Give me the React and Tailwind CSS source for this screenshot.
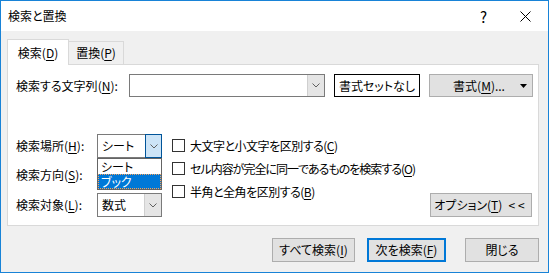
import React from 'react';

const font = "font-['Noto_Sans_CJK_JP','Noto_Sans',sans-serif] [font-feature-settings:'palt']";

// label text with an underlined access key, e.g. 検索(D)
function Label({ text, hotkey, tail = '' }) {
  return (
    <span className="whitespace-nowrap">
      {text}(<span className="underline underline-offset-2">{hotkey}</span>){tail}
    </span>
  );
}

function Chevron() {
  return (
    <svg width="8" height="5" viewBox="0 0 8 5" className="block">
      <path d="M0.5 0.5 L4 4 L7.5 0.5" fill="none" stroke="#606060" strokeWidth="1" />
    </svg>
  );
}

function Combo({ value, width, height = 'h-[24px]', active = false }) {
  return (
    <div className={`flex shrink-0 ${height} ${width} border border-[#7a7a7a] bg-white`}>
      <div className="flex flex-1 items-center pl-[4px]">{value}</div>
      <div
        className={
          active
            ? 'flex w-[17px] items-center justify-center border border-[#005499] bg-[#cce4f7] -m-px'
            : 'flex w-[17px] items-center justify-center border-l border-[#cfcfcf] bg-[#e5e5e5]'
        }
      >
        <Chevron />
      </div>
    </div>
  );
}

function Check({ children, tracking }) {
  return (
    <div className="flex h-[23px] items-center gap-[5px]">
      <div className="h-[13px] w-[13px] shrink-0 border border-[#333333] bg-white" />
      <span className={tracking}>{children}</span>
    </div>
  );
}

function Btn({ children, width, primary = false }) {
  return (
    <div
      className={
        'flex h-[24px] shrink-0 items-center justify-center bg-[#e1e1e1] ' +
        width +
        (primary ? ' border-2 border-[#0078d7]' : ' border border-[#adadad]')
      }
    >
      {children}
    </div>
  );
}

export default function App() {
  return (
    <div className={`flex h-[273px] w-[549px] flex-col border border-[#1883d7] text-[12px] leading-none text-black ${font}`}>
      {/* Title bar */}
      <div className="flex h-[30px] items-center bg-white pl-[7px]">
        <span>検索と置換</span>
        <span className="ml-auto mr-[33px] text-[15px]">?</span>
        <svg width="11" height="11" viewBox="0 0 11 11" className="mr-[17px]">
          <path d="M0.5 0.5 L10.5 10.5 M10.5 0.5 L0.5 10.5" stroke="#000" strokeWidth="1" />
        </svg>
      </div>

      {/* Body */}
      <div className="flex flex-1 flex-col bg-[#f0f0f0] pl-[6px] pr-[9px] pt-[8px]">
        {/* Tabs */}
        <div className="flex h-[25px] items-start">
          <div className="relative z-10 flex h-[26px] w-[62px] items-center justify-center border border-b-0 border-[#d9d9d9] bg-white">
            <Label text="検索" hotkey="D" />
          </div>
          <div className="mt-[2px] flex h-[23px] w-[55px] items-center justify-center border border-b-0 border-l-0 border-[#d9d9d9] bg-[#f0f0f0]">
            <Label text="置換" hotkey="P" />
          </div>
        </div>

        {/* Panel */}
        <div className="flex h-[162px] flex-col border border-[#d9d9d9] bg-white pl-[8px] pt-[9px]">
          <div className="flex items-center">
            <div className="w-[113px]">
              <Label text="検索する文字列" hotkey="N" tail=":" />
            </div>
            <Combo value="" width="w-[196px]" height="h-[23px]" />
            <div className="ml-[9px] flex h-[23px] w-[86px] items-center justify-center border border-black bg-white">
              書式セットなし
            </div>
            <div className="ml-[9px] flex h-[23px] w-[104px] items-center border border-[#adadad] bg-[#e1e1e1]">
              <span className="flex-1 text-center pl-[8px]">
                <Label text="書式" hotkey="M" tail="..." />
              </span>
              <svg width="7" height="4" viewBox="0 0 7 4" className="mr-[5px]">
                <path d="M0 0 H7 L3.5 4 Z" fill="#000" />
              </svg>
            </div>
          </div>

          <div className="mt-[37px] flex">
            {/* Left column: search options */}
            <div className="relative flex flex-col gap-[5px]">
              <div className="flex items-center">
                <div className="w-[81px]"><Label text="検索場所" hotkey="H" tail=":" /></div>
                <Combo value="シート" width="w-[65px]" active />
              </div>
              <div className="flex items-center">
                <div className="w-[81px]"><Label text="検索方向" hotkey="S" tail=":" /></div>
                <Combo value="" width="w-[65px]" />
              </div>
              <div className="mt-px flex items-center">
                <div className="w-[81px]"><Label text="検索対象" hotkey="L" tail=":" /></div>
                <Combo value="数式" width="w-[65px]" />
              </div>

              {/* open dropdown list */}
              <div className="absolute left-[81px] top-[24px] z-20 flex w-[65px] flex-col border border-[#646464] bg-white">
                <div className="flex h-[15px] items-center pl-[3px]">シート</div>
                <div className="flex h-[15px] items-center border border-dotted border-[#f7a35c] bg-[#0078d7] pl-[2px] text-white">
                  ブック
                </div>
              </div>
            </div>

            {/* Checkboxes */}
            <div className="ml-[10px] flex flex-col">
              <Check tracking="tracking-[-0.5px]"><Label text="大文字と小文字を区別する" hotkey="C" /></Check>
              <Check tracking="tracking-[-1px]"><Label text="セル内容が完全に同一であるものを検索する" hotkey="O" /></Check>
              <Check tracking="tracking-[-0.5px]"><Label text="半角と全角を区別する" hotkey="B" /></Check>
            </div>

            <div className="ml-auto mr-[6px] flex flex-col justify-end">
              <Btn width="w-[102px]">
                <span>
                  オプション(<span className="underline underline-offset-2">T</span>)
                  <span className="ml-[6px] tracking-[3px]">&lt;&lt;</span>
                </span>
              </Btn>
            </div>
          </div>
        </div>

        {/* Bottom buttons */}
        <div className="mt-[12px] flex justify-end gap-[12px]">
          <Btn width="w-[83px]"><Label text="すべて検索" hotkey="I" /></Btn>
          <Btn width="w-[79px]" primary><Label text="次を検索" hotkey="F" /></Btn>
          <div className="ml-[7px]">
            <Btn width="w-[74px]">閉じる</Btn>
          </div>
        </div>
      </div>
    </div>
  );
}
